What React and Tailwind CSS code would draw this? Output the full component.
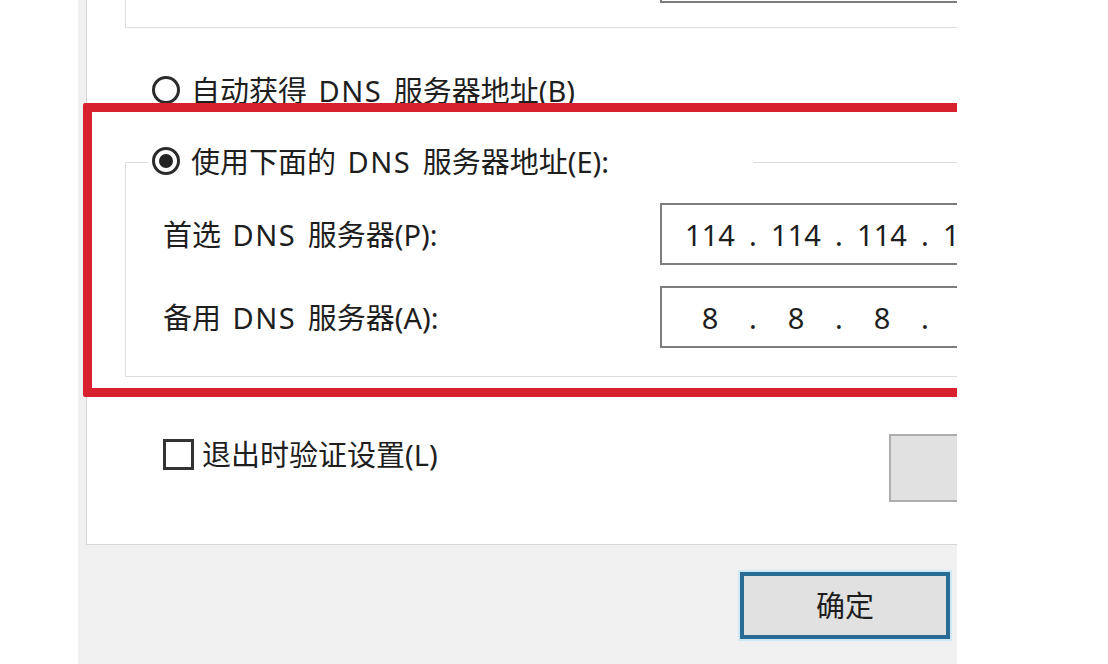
import React from "react";

function Radio({ checked }) {
  return (
    <span className="w-[28px] h-[28px] rounded-full border-[3px] border-[#2b2b2b] bg-white flex items-center justify-center shrink-0">
      {checked && <span className="w-[14px] h-[14px] rounded-full bg-[#222]"></span>}
    </span>
  );
}

// the latin run in the original UI font is a bit wider than Noto's
function Dns() {
  return <span className="mx-[4px] tracking-[1.5px]">DNS</span>;
}

function IpField({ parts }) {
  return (
    <div className="w-[360px] h-[62px] border-2 border-[#7d7d7d] bg-white flex items-center pl-[12px] shrink-0">
      {parts.map((p, i) => (
        <React.Fragment key={i}>
          {i > 0 && <span className="w-[14px] text-center shrink-0">.</span>}
          <span className="w-[72px] text-center shrink-0">{p}</span>
        </React.Fragment>
      ))}
    </div>
  );
}

export default function App() {
  return (
    <div className="w-[1108px] h-[664px] bg-white flex overflow-hidden text-[29px] leading-none text-[#1e1e1e] font-['Noto_Sans','Noto_Sans_CJK_SC',sans-serif]">
      {/* dialog, cropped at the right */}
      <div className="relative ml-[78px] w-[879px] h-full shrink-0 bg-[#f0f0f0] overflow-hidden flex flex-col">
        {/* tab page */}
        <div className="ml-[8px] w-[1000px] h-[545px] shrink-0 bg-white border-l border-b border-[#d6d6d6] flex flex-col">
          {/* tail of the IP address group box */}
          <div className="ml-[38px] h-[28px] border-l border-b border-[#dcdcdc]">
            <div className="ml-[534px] w-[330px] h-[3px] border-l-2 border-b-2 border-[#7d7d7d]"></div>
          </div>

          {/* auto dns */}
          <div className="mt-[46px] ml-[65px] h-[32px] flex items-center gap-[11px]">
            <Radio />
            <span>自动获得 <Dns /> 服务器地址(B)</span>
          </div>

          {/* manual dns group */}
          <div className="mt-[56px] ml-[38px] border-l border-t border-b border-[#dcdcdc] pb-[28px]">
            <div className="-mt-[18px] ml-[22px] w-[605px] h-[32px] bg-white pl-[4px] flex items-center gap-[11px]">
              <Radio checked />
              <span>使用下面的 <Dns /> 服务器地址(E):</span>
            </div>

            <div className="mt-[26px] flex items-center">
              <span className="ml-[37px] w-[497px] shrink-0">首选 <Dns /> 服务器(P):</span>
              <IpField parts={["114", "114", "114", "114"]} />
            </div>
            <div className="mt-[21px] flex items-center">
              <span className="ml-[37px] w-[497px] shrink-0">备用 <Dns /> 服务器(A):</span>
              <IpField parts={["8", "8", "8", "8"]} />
            </div>
          </div>

          {/* validate + advanced */}
          <div className="mt-[57px] ml-[76px] flex items-start">
            <div className="mt-[5px] w-[726px] h-[31px] shrink-0 flex items-center gap-[8px]">
              <span className="w-[31px] h-[31px] border-[3px] border-[#333] bg-white shrink-0"></span>
              <span>退出时验证设置(L)</span>
            </div>
            <div className="w-[180px] h-[68px] bg-[#e1e1e1] border-2 border-[#adadad] shrink-0"></div>
          </div>
        </div>

        {/* footer */}
        <div className="mt-[27px] ml-[662px]">
          <button className="w-[210px] h-[67px] bg-[#e1e1e1] border-[4px] border-[#2b6c96] shadow-[0_0_0_2px_#cfe9f9] flex items-center justify-center text-[29px] text-[#1e1e1e]">
            确定
          </button>
        </div>

        {/* red highlight annotation */}
        <div className="absolute left-[5px] top-[103px] w-[920px] h-[294px] border-[9px] border-[#d7212e] rounded-[2px]"></div>
      </div>
    </div>
  );
}
